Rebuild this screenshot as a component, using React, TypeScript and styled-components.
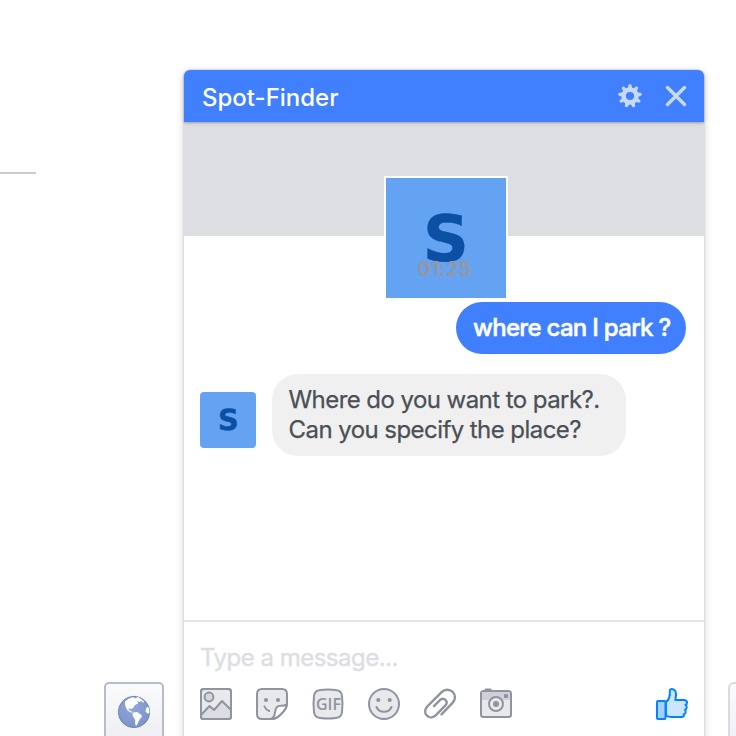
import React from "react";
import styled, { createGlobalStyle } from "styled-components";

const GlobalStyle = createGlobalStyle`
  * { box-sizing: border-box; }
  body { margin: 0; background: #fff; overflow: hidden; }
`;

const Page = styled.div`
  display: grid;
  grid-template-columns: 184px 520px 32px;
  grid-template-rows: 736px;
  height: 736px;
  width: 736px;
  overflow: hidden;
  font-family: Inter, "Liberation Sans", sans-serif;
`;

const LeftColumn = styled.aside`
  display: flex;
  flex-direction: column;
  padding-top: 172px;
`;

const Rule = styled.div`
  width: 36px;
  height: 2px;
  background: #cccccc;
`;

const DockButton = styled.div`
  display: flex;
  justify-content: center;
  width: 60px;
  height: 70px;
  margin: auto 20px -16px auto;
  padding-top: 11px;
  border: 2px solid #b6bccb;
  border-radius: 5px;
  background: linear-gradient(#fafbfc, #eceef1 60px);
`;

const RightColumn = styled.aside`
  display: flex;
  align-items: flex-end;
  padding-left: 24px;
  overflow: hidden;
`;

const EdgeButton = styled.div`
  flex: none;
  width: 60px;
  height: 70px;
  margin-bottom: -16px;
  border: 2px solid #d9dbe0;
  border-radius: 6px;
  background: linear-gradient(#fafafc, #eeeff2 60px);
`;

const ChatWindow = styled.main`
  display: flex;
  flex-direction: column;
  height: 680px;
  margin-top: 70px;
  border-radius: 6px 6px 0 0;
  background: #fff;
  box-shadow: 0 0 2px rgba(0, 0, 0, 0.2), 0 2px 8px rgba(0, 0, 0, 0.18);
`;

const Header = styled.header`
  position: relative;
  z-index: 1;
  display: flex;
  align-items: center;
  flex: none;
  height: 52px;
  padding: 0 16px 0 18px;
  border-radius: 6px 6px 0 0;
  background: #4080ff;
  box-shadow: 0 1px 3px rgba(0, 0, 0, 0.3);
`;

const Title = styled.h1`
  flex: 1;
  margin: 3px 0 0;
  color: #fff;
  font-size: 24px;
  font-weight: 500;
  line-height: 30px;
  letter-spacing: 0;
`;

const HeaderIcons = styled.div`
  display: flex;
  gap: 22px;
  color: #c6d9ff;
`;

const Cover = styled.div`
  display: flex;
  justify-content: center;
  flex: none;
  height: 114px;
  padding: 54px 0 0 4px;
  background: #dddee2;
`;

const Avatar = styled.div<{ $large?: boolean }>`
  display: flex;
  align-items: center;
  justify-content: center;
  flex: none;
  width: ${(p) => (p.$large ? 124 : 56)}px;
  height: ${(p) => (p.$large ? 124 : 56)}px;
  padding-top: ${(p) => (p.$large ? 2 : 1)}px;
  border: ${(p) => (p.$large ? "2px solid #fff" : "none")};
  border-radius: ${(p) => (p.$large ? 0 : 4)}px;
  background: #64a2f2;
  color: #0c50a5;
  font-family: "DejaVu Sans", sans-serif;
  font-size: ${(p) => (p.$large ? 64 : 29)}px;
  font-weight: 700;
  line-height: 1;
`;

const Initial = styled.span`
  transform: skewX(-1deg);
  -webkit-text-stroke: 0.4px #0c50a5;
`;

const Conversation = styled.section`
  position: relative;
  display: flex;
  flex-direction: column;
  flex: none;
  height: 384px;
  padding: 20px 18px 0 16px;
`;

const Timestamp = styled.time`
  align-self: center;
  height: 26px;
  margin: 0 0 20px 3px;
  color: #96979e;
  font-size: 19.5px;
  font-weight: 700;
  letter-spacing: 0.2px;
  line-height: 26px;
`;

const MessageRow = styled.div<{ $mine?: boolean }>`
  display: flex;
  align-items: flex-end;
  justify-content: ${(p) => (p.$mine ? "flex-end" : "flex-start")};
  gap: 16px;
  margin-bottom: 20px;
`;

const AvatarSlot = styled.div`
  padding-bottom: 8px;
`;

const Bubble = styled.div<{ $mine?: boolean }>`
  width: ${(p) => (p.$mine ? 230 : 354)}px;
  padding: 11px 0 11px ${(p) => (p.$mine ? 17 : 16.5)}px;
  border-radius: 26px;
  background: ${(p) => (p.$mine ? "#4080ff" : "#f0f0f0")};
  color: ${(p) => (p.$mine ? "#fff" : "#4b4f56")};
  font-size: 24px;
  font-weight: ${(p) => (p.$mine ? 500 : 400)};
  letter-spacing: ${(p) => (p.$mine ? -0.7 : -0.56)}px;
  line-height: 30px;
  white-space: nowrap;
  -webkit-text-stroke: ${(p) => (p.$mine ? "0.5px #fff" : "0.25px #4b4f56")};
`;

const Composer = styled.footer`
  flex: none;
  height: 130px;
  padding: 20px 16px 0;
  border-top: 2px solid #e5e5e5;
`;

const Placeholder = styled.div`
  height: 32px;
  margin-bottom: 12px;
  color: #dcdee3;
  font-size: 24px;
  line-height: 32px;
  letter-spacing: -0.5px;
  -webkit-text-stroke: 0.4px #dcdee3;
`;

const Toolbar = styled.div`
  display: flex;
  align-items: center;
  gap: 24px;
  height: 36px;
`;

const Icon = styled.svg<{ $end?: boolean }>`
  flex: none;
  display: block;
  width: 32px;
  height: 32px;
  overflow: visible;
  margin-left: ${(p) => (p.$end ? "auto" : 0)};
  fill: #e8e9eb;
  stroke: #9094a0;
  stroke-width: 2;
  stroke-linecap: round;
  stroke-linejoin: round;
`;

const GifLabel = styled.text`
  fill: #9094a0;
  stroke: none;
  font: 600 16px "Open Sans", sans-serif;
  text-anchor: middle;
`;

const teeth = Array.from({ length: 9 }, (_, i) => i * 40);

const Gear = () => (
  <svg width="24" height="24" viewBox="0 0 24 24">
    <circle cx="12" cy="12" r="6.4" fill="none" stroke="currentColor" strokeWidth="4.6" />
    {teeth.map((a) => (
      <path key={a} d="M9.9 4L10.6 .8Q12 -.6 13.4 .8L14.1 4Z" fill="currentColor" transform={`rotate(${a} 12 12)`} />
    ))}
  </svg>
);

const Close = () => (
  <svg width="24" height="24" viewBox="0 0 24 24">
    <path d="M3.5 3.5L20.5 20.5M20.5 3.5L3.5 20.5" stroke="currentColor" strokeWidth="3.4" strokeLinecap="round" />
  </svg>
);

const Globe = () => (
  <svg width="34" height="34" viewBox="0 0 34 34">
    <defs>
      <radialGradient id="sea" cx=".45" cy=".35" r=".7">
        <stop offset="0" stopColor="#8fa8dc" />
        <stop offset="1" stopColor="#7c92c8" />
      </radialGradient>
    </defs>
    <circle cx="17" cy="17" r="15.7" fill="url(#sea)" stroke="#667ba8" strokeWidth=".8" />
    <path
      d="M8 6.5Q12 2.8 16 2L18 3.5L21 2L25 4.5L23 7L20.5 6L21 8.5L18 10L16 13L14 14L12 13.2L11.7 15L14 16L16 18L14 17.5L10.5 15.5L8.7 12L8 9Z"
      fill="#fff"
    />
    <path d="M16.5 17.5L20 17L24.5 20L24.8 22L22.5 24.5L20.5 29L19 31.2L18 28L18.3 25L16 21.5L15.5 19Z" fill="#fff" />
    <path d="M31 11.5L29 13.5L28.5 16.5L30.5 18.5L32.3 18.2Q33 14.8 31 11.5Z" fill="#fff" />
    <path d="M23 3.8L27 6L26.5 8L24.5 6.5Z" fill="#e8edf9" />
  </svg>
);

const Photo = () => (
  <Icon viewBox="0 0 32 32">
    <rect x="1" y="1" width="30" height="30" rx="2.5" />
    <path d="M1.5 26.5L9.5 18L14 22L22 13L30.5 21.5V29Q30.5 30 28.5 30H3.5Q1.5 30 1.5 28Z" fill="#dcdde0" stroke="none" />
    <path d="M1.5 26.5L9.5 18L14 22L22 13L30.5 21.5" fill="none" />
    <rect x="1" y="1" width="30" height="30" rx="2.5" fill="none" />
    <circle cx="9" cy="9" r="4.4" fill="#d7d8dc" />
  </Icon>
);

const Sticker = () => (
  <Icon viewBox="0 0 32 32">
    <path d="M6 1H26Q31 1 31 6V15Q31 20 27 24L24 27Q20 31 15 31H6Q1 31 1 26V6Q1 1 6 1Z" />
    <path d="M30.8 16.3C27 18.8 23 17 20.8 19.2C18 22 20.5 28 15.5 30.8Q20.5 31 24 27L27 24Q30.5 20.5 30.8 16.3Z" fill="#fff" />
    <path d="M8.5 18.5Q9.8 21.8 13.2 23" fill="none" />
    <g fill="#9094a0" stroke="none">
      <circle cx="10" cy="12" r="2.1" />
      <circle cx="22" cy="12" r="2.1" />
    </g>
  </Icon>
);

const Gif = () => (
  <Icon viewBox="0 0 32 32">
    <path d="M8 2Q16 1 24 2Q29.5 2.5 30 8Q31 16 30 24Q29.5 29.5 24 30Q16 31 8 30Q2.5 29.5 2 24Q1 16 2 8Q2.5 2.5 8 2Z" />
    <GifLabel x="16.4" y="21.8">GIF</GifLabel>
  </Icon>
);

const Smile = () => (
  <Icon viewBox="0 0 32 32">
    <circle cx="16" cy="16" r="15" />
    <path d="M8.5 19Q10.5 23.8 16 23.8T23.5 19" fill="none" />
    <g fill="#9094a0" stroke="none">
      <circle cx="10.3" cy="12" r="2.1" />
      <circle cx="21.7" cy="12" r="2.1" />
    </g>
  </Icon>
);

const Clip = () => (
  <Icon viewBox="0 0 32 32">
    <path
      d="M17.5 26.3L28.3 15.2C31.7 11.7 31.8 7 28.8 4C25.8 1 20.8 1 17.6 4.2L3.6 18.2C.4 21.4 .3 25 3 27.7C5.6 30.3 9.3 29.8 11.9 27.2L21.2 17.7C23 15.8 23 13.4 21.4 11.8C19.8 10.3 17.6 10.5 15.9 12.2L10 18.1"
      fill="none"
      strokeWidth="2.4"
    />
  </Icon>
);

const Camera = () => (
  <Icon viewBox="0 0 32 32">
    <path d="M5.5 3V1.5H10.5V3" fill="#9094a0" />
    <rect x="1" y="3" width="30" height="26" rx="2.5" />
    <path d="M2 4H30V12H2Z" fill="#d0d1d5" stroke="none" />
    <circle cx="16" cy="16" r="7" />
    <circle cx="16" cy="16" r="3" fill="#9094a0" stroke="none" />
    <rect x="24" y="6" width="4" height="4" rx="1" fill="#9094a0" stroke="none" />
  </Icon>
);

const LikeIcon = styled(Icon)`
  fill: #cce5ff;
  stroke: #0084ff;
`;

const Like = () => (
  <LikeIcon viewBox="0 0 32 32" $end>
    <path d="M10 14Q14.5 10.5 13.8 3Q13.7 1 16 1C19 1 20.3 4.3 20 7.5L19.3 12H27.5Q31 12 31 14.5Q31 16.3 29.5 17Q31 18 30.7 19.7Q30.5 21.2 29 22Q30.2 23 29.6 24.7Q29 26 27.7 26.3Q28.6 29 25.5 29H15Q12 29 10 27.5Z" />
    <rect x="1" y="13" width="8.5" height="18" rx="1" fill="#a6d0fa" />
  </LikeIcon>
);

export default function App() {
  return (
    <>
      <GlobalStyle />
      <Page>
        <LeftColumn>
          <Rule />
          <DockButton>
            <Globe />
          </DockButton>
        </LeftColumn>
        <ChatWindow>
          <Header>
            <Title>Spot-Finder</Title>
            <HeaderIcons>
              <Gear />
              <Close />
            </HeaderIcons>
          </Header>
          <Cover>
            <Avatar $large>
              <Initial>S</Initial>
            </Avatar>
          </Cover>
          <Conversation>
            <Timestamp>01:25</Timestamp>
            <MessageRow $mine>
              <Bubble $mine>where can I park ?</Bubble>
            </MessageRow>
            <MessageRow>
              <AvatarSlot>
                <Avatar>
                  <Initial>S</Initial>
                </Avatar>
              </AvatarSlot>
              <Bubble>
                Where do you want to park?.
                <br />
                Can you specify the place?
              </Bubble>
            </MessageRow>
          </Conversation>
          <Composer>
            <Placeholder>Type a message...</Placeholder>
            <Toolbar>
              <Photo />
              <Sticker />
              <Gif />
              <Smile />
              <Clip />
              <Camera />
              <Like />
            </Toolbar>
          </Composer>
        </ChatWindow>
        <RightColumn>
          <EdgeButton />
        </RightColumn>
      </Page>
    </>
  );
}
